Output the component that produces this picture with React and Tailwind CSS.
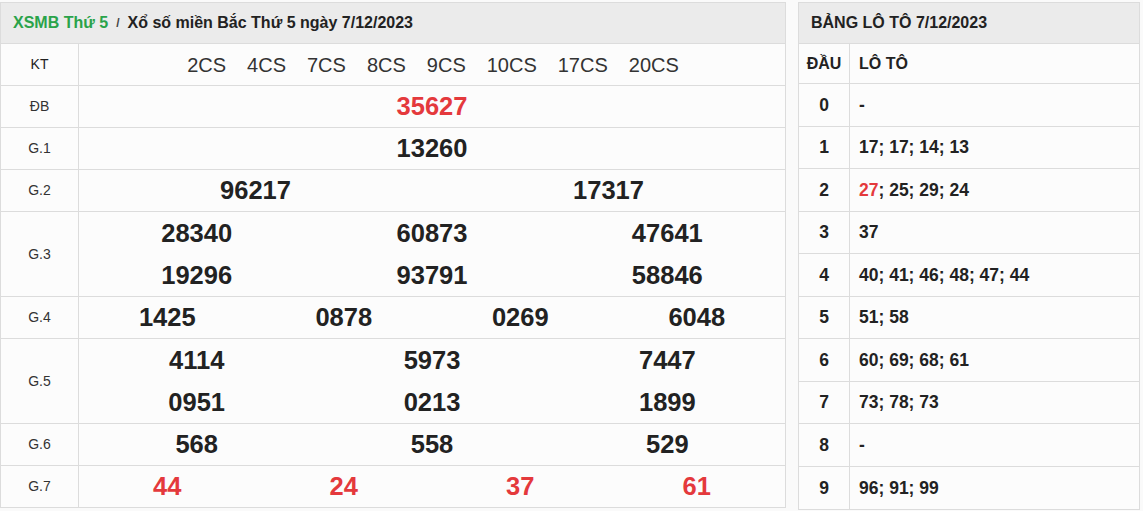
import React from 'react';

const rows = [
  { label: 'ĐB', lines: [['35627']], red: true },
  { label: 'G.1', lines: [['13260']] },
  { label: 'G.2', lines: [['96217', '17317']] },
  { label: 'G.3', lines: [['28340', '60873', '47641'], ['19296', '93791', '58846']] },
  { label: 'G.4', lines: [['1425', '0878', '0269', '6048']] },
  { label: 'G.5', lines: [['4114', '5973', '7447'], ['0951', '0213', '1899']] },
  { label: 'G.6', lines: [['568', '558', '529']] },
  { label: 'G.7', lines: [['44', '24', '37', '61']], red: true },
];

const loto = [
  ['0', [['-']]],
  ['1', [['17; 17; 14; 13']]],
  ['2', [['27', true], ['; 25; 29; 24']]],
  ['3', [['37']]],
  ['4', [['40; 41; 46; 48; 47; 44']]],
  ['5', [['51; 58']]],
  ['6', [['60; 69; 68; 61']]],
  ['7', [['73; 78; 73']]],
  ['8', [['-']]],
  ['9', [['96; 91; 99']]],
];

const cols = { 1: 'grid-cols-1', 2: 'grid-cols-2', 3: 'grid-cols-3', 4: 'grid-cols-4' };

export default function App() {
  return (
    <div className="flex gap-[12px] bg-[#fafafa] pt-[2px] w-[1143px] h-[511px] text-[#222]" style={{ fontFamily: '"Liberation Sans", Arial, sans-serif' }}>
      {/* ket qua */}
      <div className="w-[786px] border border-[#dcdcdc] bg-[#fcfcfc] self-start">
        <div className="h-[41px] flex items-center px-[12px] bg-[#ebebeb] border-b border-[#dcdcdc] text-[16px] font-bold">
          <span className="text-[#2aa34a]">XSMB Thứ 5</span>
          <span className="mx-[8px] text-[12px] text-[#444]">/</span>
          <span>Xổ số miền Bắc Thứ 5 ngày 7/12/2023</span>
        </div>
        <div className="flex h-[42px] border-b border-[#dcdcdc]">
          <div className="w-[78px] shrink-0 border-r border-[#dcdcdc] flex items-center justify-center text-[14px]">KT</div>
          <div className="flex-1 flex items-center justify-center gap-[21px] text-[20px] text-[#333] pl-[2px]">
            {['2CS', '4CS', '7CS', '8CS', '9CS', '10CS', '17CS', '20CS'].map((s) => (
              <span key={s}>{s}</span>
            ))}
          </div>
        </div>
        {rows.map((r, i) => (
          <div key={r.label} className={`flex ${i < rows.length - 1 ? 'border-b' : ''} border-[#dcdcdc]`}>
            <div className="w-[78px] shrink-0 border-r border-[#dcdcdc] flex items-center justify-center text-[14px] text-[#333]">{r.label}</div>
            <div className="flex-1">
              {r.lines.map((line, j) => (
                <div key={j} className={`grid ${cols[line.length]} ${r.lines.length > 1 ? 'h-[42px]' : 'h-[41px]'} items-center`}>
                  {line.map((n, k) => (
                    <div key={k} className={`text-center text-[25.5px] font-bold ${r.red ? 'text-[#e4393c]' : 'text-[#222]'}`}>{n}</div>
                  ))}
                </div>
              ))}
            </div>
          </div>
        ))}
      </div>

      {/* lo to */}
      <div className="w-[342px] border border-[#dcdcdc] bg-[#fcfcfc] self-start">
        <div className="h-[41px] flex items-center px-[12px] bg-[#ebebeb] border-b border-[#dcdcdc] text-[16px] font-bold">
          BẢNG LÔ TÔ 7/12/2023
        </div>
        <div className="flex h-[40px] border-b border-[#dcdcdc] text-[16px] font-bold">
          <div className="w-[51px] shrink-0 border-r border-[#dcdcdc] flex items-center justify-center">ĐẦU</div>
          <div className="flex-1 flex items-center pl-[9px]">LÔ TÔ</div>
        </div>
        {loto.map(([d, parts], i) => (
          <div key={d} className={`flex h-[42.5px] ${i < loto.length - 1 ? 'border-b' : ''} border-[#dcdcdc] text-[17.5px] font-bold`}>
            <div className="w-[51px] shrink-0 border-r border-[#dcdcdc] flex items-center justify-center">{d}</div>
            <div className="flex-1 flex items-center pl-[9px]">
              {parts.map(([t, red], k) => (
                <span key={k} className={red ? 'text-[#e4393c]' : ''}>{t}</span>
              ))}
            </div>
          </div>
        ))}
      </div>
    </div>
  );
}
